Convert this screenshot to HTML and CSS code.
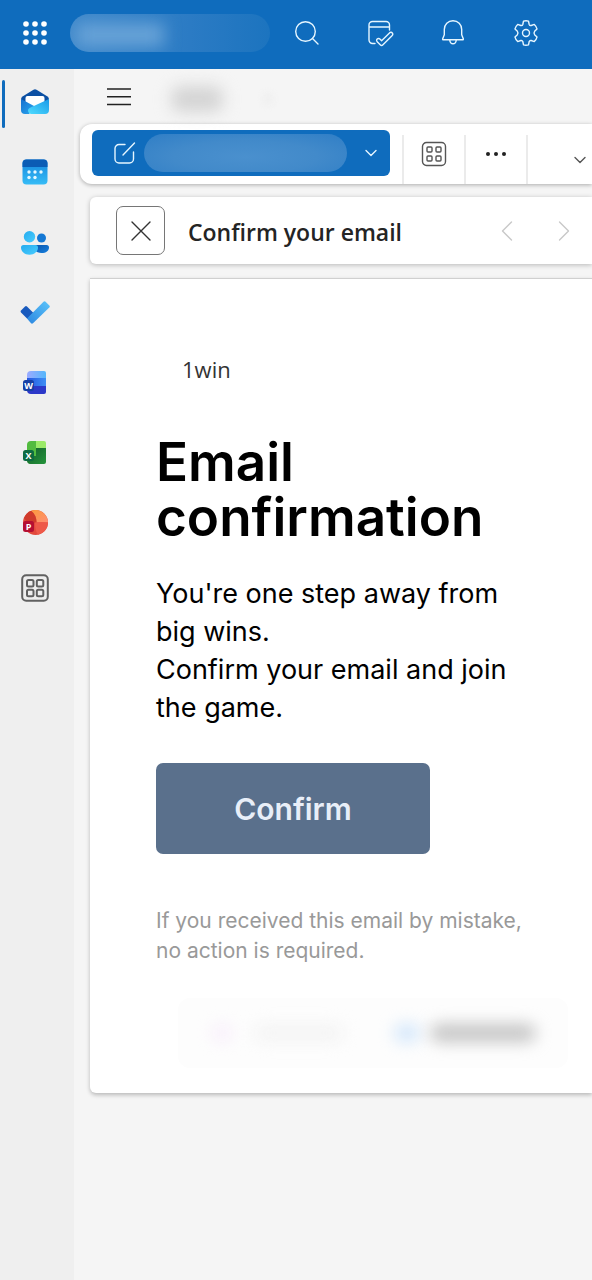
FILE: index.html
```html
<!DOCTYPE html>
<html lang="en">
<head>
  <meta charset="UTF-8">
  <meta name="viewport" content="width=device-width, initial-scale=1">
  <title>Confirm your email</title>
  <link rel="stylesheet" href="styles.css">
</head>
<body>

<header class="topbar">
  <button class="launcher" aria-label="App launcher">
    <svg width="26" height="26" viewBox="0 0 26 26" fill="#fff">
      <circle cx="4" cy="4" r="2.8"/><circle cx="13" cy="4" r="2.8"/><circle cx="22" cy="4" r="2.8"/>
      <circle cx="4" cy="13" r="2.8"/><circle cx="13" cy="13" r="2.8"/><circle cx="22" cy="13" r="2.8"/>
      <circle cx="4" cy="22" r="2.8"/><circle cx="13" cy="22" r="2.8"/><circle cx="22" cy="22" r="2.8"/>
    </svg>
  </button>
  <div class="brand"><span class="brand-smudge"></span></div>
  <button class="top-btn" aria-label="Search">
    <svg class="line" width="28" height="28" viewBox="0 0 28 28"><circle cx="12.5" cy="12.5" r="9.8"/><path d="M19.5 19.5L25 25"/></svg>
  </button>
  <button class="top-btn" aria-label="My day">
    <svg class="line" width="28" height="28" viewBox="0 0 28 28">
      <path d="M9 24.500H6.500a3.500 3.500 0 0 1-3.500-3.500V6a3.500 3.500 0 0 1 3.500-3.500H20A3.500 3.500 0 0 1 23.500 6v5M3 8h20.500"/>
      <path d="M24 13.500a1.900 1.900 0 0 1 2 3.200l-9.300 9.300a1.500 1.500 0 0 1-2.200 0l-3.300-3.300a1.900 1.900 0 0 1 2.700-2.700l1.700 1.700z"/>
    </svg>
  </button>
  <button class="top-btn" aria-label="Notifications">
    <svg class="line" width="28" height="28" viewBox="0 0 28 28">
      <path d="M14 1.800c-5 0-8.700 3.800-8.700 8.700v5.300l-1.600 4c-.2.500.1 1 .7 1h19.200c.6 0 .9-.5.700-1l-1.600-4v-5.300c0-4.900-3.700-8.700-8.700-8.700z"/>
      <path d="M10.800 21a3.200 3.800 0 0 0 6.400 0"/>
    </svg>
  </button>
  <button class="top-btn" aria-label="Settings">
    <svg class="line" width="28" height="28" viewBox="0 0 28 28">
      <path d="M11.500 2.200Q14 1.400 16.500 2.200L17.200 5.500Q17.700 6.800 19.200 6.500L22.300 5.400Q24.300 7.200 25 9.900L22.600 12.300Q21.400 14 22.600 15.700L25 18.100Q24.300 20.800 22.300 22.600L19.200 21.500Q17.700 21.200 17.200 22.500L16.500 25.800Q14 26.600 11.500 25.800L10.800 22.500Q10.300 21.200 8.800 21.500L5.700 22.600Q3.700 20.800 3 18.100L5.400 15.700Q6.600 14 5.400 12.300L3 9.900Q3.700 7.200 5.700 5.400L8.800 6.500Q10.300 6.800 10.800 5.500Z"/>
      <circle cx="14" cy="14" r="3.500"/>
    </svg>
  </button>
</header>

<div class="layout">
  <nav class="rail" aria-label="Apps">
    <a href="#" class="rail-item active" aria-label="Mail">
      <svg width="28" height="28" viewBox="0 0 28 28">
        <defs>
          <linearGradient id="mailL" x1="0" y1="0" x2="1" y2="1"><stop offset="0" stop-color="#1670cf"/><stop offset="1" stop-color="#2aa9f0"/></linearGradient>
          <linearGradient id="mailR" x1="0" y1="1" x2="1" y2="0"><stop offset="0" stop-color="#4fdcff"/><stop offset="1" stop-color="#1a9ae8"/></linearGradient>
        </defs>
        <path d="M0 11.500Q0 9.500 1.500 8.500L12.500 1.800Q14 .9 15.500 1.800L26.500 8.500Q28 9.500 28 11.500L14 21z" fill="#0b4fa3"/>
        <rect x="4.500" y="8" width="19" height="12" rx="2" fill="#fff"/>
        <path d="M0 11l14 7.500L8 26H4a4 4 0 0 1-4-4z" fill="url(#mailL)"/>
        <path d="M28 11v11a4 4 0 0 1-4 4H10.500a3.300 3.300 0 0 1-1.500-6.300z" fill="url(#mailR)"/>
      </svg>
    </a>
    <a href="#" class="rail-item" aria-label="Calendar">
      <svg width="26" height="26" viewBox="0 0 26 26">
        <defs><linearGradient id="cal" x1="0" y1="0" x2="0" y2="1"><stop offset="0" stop-color="#1586dd"/><stop offset="1" stop-color="#36bcf6"/></linearGradient></defs>
        <rect x=".5" y=".5" width="25" height="25" rx="4" fill="url(#cal)"/>
        <path d="M.5 8V4.500a4 4 0 0 1 4-4h17a4 4 0 0 1 4 4V8z" fill="#0b5cb5"/>
        <g fill="#e4f8ff"><circle cx="7" cy="13" r="1.700"/><circle cx="13" cy="13" r="1.700"/><circle cx="19" cy="13" r="1.700"/><circle cx="7" cy="18.500" r="1.700"/><circle cx="13" cy="18.500" r="1.700"/></g>
      </svg>
    </a>
    <a href="#" class="rail-item" aria-label="People">
      <svg width="28" height="28" viewBox="0 0 28 28">
        <defs>
          <linearGradient id="ppl" x1="0" y1="0" x2="1" y2="1"><stop offset="0" stop-color="#25abee"/><stop offset="1" stop-color="#49cdff"/></linearGradient>
          <linearGradient id="ppl2" x1="0" y1="0" x2="1" y2="1"><stop offset="0" stop-color="#0b55ac"/><stop offset="1" stop-color="#1580df"/></linearGradient>
        </defs>
        <circle cx="20.500" cy="10" r="4.500" fill="#1478d4"/>
        <path d="M14 17h11.500a2.500 2.500 0 0 1 2.500 2.500c0 3.500-3 5.500-7.500 5.500-3 0-5-1-6.500-2.500z" fill="url(#ppl2)"/>
        <circle cx="8.500" cy="8.800" r="5.700" fill="url(#ppl)"/>
        <path d="M2.500 17h12a2.500 2.500 0 0 1 2.500 2.500c0 4-3.500 7.200-8.500 7.200S0 23.500 0 19.500A2.500 2.500 0 0 1 2.500 17z" fill="url(#ppl)"/>
      </svg>
    </a>
    <a href="#" class="rail-item" aria-label="To Do">
      <svg width="30" height="30" viewBox="0 0 30 30">
        <defs><linearGradient id="todo" x1="0" y1="1" x2="1" y2="0"><stop offset="0" stop-color="#2b86e0"/><stop offset="1" stop-color="#5bc4fa"/></linearGradient></defs>
        <path d="M1 15.500a1.500 1.500 0 0 1 0-2l4-4a1.500 1.500 0 0 1 2 0l6.500 6.500-6 6z" fill="#185abd"/>
        <path d="M7 21.500L23.500 4.700a1.500 1.500 0 0 1 2.100 0l3.700 3.700a1.500 1.500 0 0 1 0 2.100L13 26.300a1.500 1.500 0 0 1-2 0z" fill="url(#todo)"/>
      </svg>
    </a>
    <a href="#" class="rail-item" aria-label="Word">
      <svg width="26" height="26" viewBox="0 0 26 26">
        <defs>
          <linearGradient id="wordT" x1="0" y1="0" x2="1" y2="0"><stop offset="0" stop-color="#9cabff"/><stop offset="1" stop-color="#54b6fb"/></linearGradient>
          <linearGradient id="wordM" x1="0" y1="0" x2="1" y2="0"><stop offset="0" stop-color="#2457df"/><stop offset="1" stop-color="#3f8ff5"/></linearGradient>
        </defs>
        <path d="M5 17h19v6a2 2 0 0 1-2 2H9a4 4 0 0 1-4-4z" fill="#2c38c9"/>
        <path d="M5 9h19v8H5z" fill="url(#wordM)"/>
        <path d="M5 9V6a4 4 0 0 1 4-4h13a2 2 0 0 1 2 2v5z" fill="url(#wordT)"/>
        <rect x="1" y="11" width="11" height="11" rx="2.500" fill="#163fa5"/>
        <text class="glyph" x="6.500" y="20">W</text>
      </svg>
    </a>
    <a href="#" class="rail-item" aria-label="Excel">
      <svg width="26" height="26" viewBox="0 0 26 26">
        <defs><linearGradient id="xl" x1="0" y1="0" x2="1" y2="1"><stop offset="0" stop-color="#135d2c"/><stop offset="1" stop-color="#25953b"/></linearGradient></defs>
        <path d="M5 6a4 4 0 0 1 4-4h5v23H9a4 4 0 0 1-4-4z" fill="#52bb3f"/>
        <path d="M14 2h8a2 2 0 0 1 2 2v5H14z" fill="#9bea68"/>
        <path d="M14 9h10v14a2 2 0 0 1-2 2H9a4 4 0 0 1-4-4v-4h9z" fill="url(#xl)"/>
        <rect x="1" y="11" width="11" height="11" rx="2.500" fill="#0d6b43"/>
        <text class="glyph" x="6.500" y="20">X</text>
      </svg>
    </a>
    <a href="#" class="rail-item" aria-label="PowerPoint">
      <svg width="26" height="26" viewBox="0 0 26 26">
        <defs><linearGradient id="ppt" x1="0" y1="0" x2="1" y2="1"><stop offset="0" stop-color="#fb9a3c"/><stop offset="1" stop-color="#ff8e74"/></linearGradient></defs>
        <circle cx="13.500" cy="13.500" r="12.500" fill="#e2483c"/>
        <path d="M9 1.800A12.500 12.500 0 0 1 26 13.500H14.500Q14.500 6 9 1.800z" fill="url(#ppt)"/>
        <path d="M9 1.800Q14.500 6 14.500 13.500L6 14 2 9Q4.500 3.500 9 1.800z" fill="#cf3a2b"/>
        <path d="M13 13.500q7-1 13 0A12.500 12.500 0 0 1 16 25.700q-3-4-3-12.200z" fill="#ee5949"/>
        <rect x="1" y="12" width="11" height="11" rx="2.500" fill="#b50f32"/>
        <text class="glyph" x="6.500" y="21">P</text>
      </svg>
    </a>
    <button class="rail-item more-apps" aria-label="More apps">
      <svg class="line" width="28" height="28" viewBox="0 0 28 28">
        <rect x="1.200" y="1.200" width="25.600" height="25.600" rx="4"/>
        <rect x="6" y="6" width="6.500" height="6.500" rx="1.500"/><rect x="15.800" y="6" width="6.500" height="6.500" rx="1.500"/>
        <rect x="6" y="15.800" width="6.500" height="6.500" rx="1.500"/><rect x="15.800" y="15.800" width="6.500" height="6.500" rx="1.500"/>
      </svg>
    </button>
  </nav>

  <main class="main">
    <div class="tabs">
      <button class="menu-btn" aria-label="Toggle folders">
        <svg class="line" width="24" height="18" viewBox="0 0 24 18"><path d="M0 1h24M0 8.700h24M0 16.500h24"/></svg>
      </button>
      <span class="tab-smudge"></span>
      <span class="tab-smudge faint"></span>
    </div>

    <div class="toolbar">
      <button class="compose" aria-label="New mail">
        <svg class="line" width="24" height="24" viewBox="0 0 24 24"><path d="M13 3.500H7A4 4 0 0 0 3 7.500V18a4 4 0 0 0 4 4h10.500a4 4 0 0 0 4-4v-7M11 14L22.500 2"/></svg>
        <span class="compose-smudge"></span>
        <svg class="line" width="12" height="8" viewBox="0 0 12 8"><path d="M1 1.500l5 5 5-5"/></svg>
      </button>
      <button class="tool" aria-label="Apps">
        <svg class="line" width="26" height="26" viewBox="0 0 26 26">
          <rect x="1.500" y="1.500" width="23" height="23" rx="4"/>
          <rect x="6" y="6" width="5" height="5" rx="1"/><rect x="15" y="6" width="5" height="5" rx="1"/>
          <rect x="6" y="15" width="5" height="5" rx="1"/><rect x="15" y="15" width="5" height="5" rx="1"/>
        </svg>
      </button>
      <button class="tool" aria-label="More options">
        <svg width="20" height="4" viewBox="0 0 20 4" fill="#222"><circle cx="2" cy="2" r="2"/><circle cx="10" cy="2" r="2"/><circle cx="18" cy="2" r="2"/></svg>
      </button>
      <button class="tool last" aria-label="Ribbon options">
        <svg class="line" width="12" height="8" viewBox="0 0 12 8"><path d="M1 1.500l5 5 5-5"/></svg>
      </button>
    </div>

    <div class="subject">
      <button class="close-btn" aria-label="Close">
        <svg class="line" width="20" height="20" viewBox="0 0 20 20"><path d="M1 1l18 18M19 1L1 19"/></svg>
      </button>
      <h2>Confirm your email</h2>
      <button class="step" aria-label="Previous"><svg class="line" width="12" height="20" viewBox="0 0 12 20"><path d="M10.500 1L1.500 10l9 9"/></svg></button>
      <button class="step" aria-label="Next"><svg class="line" width="12" height="20" viewBox="0 0 12 20"><path d="M1.500 1l9 9-9 9"/></svg></button>
    </div>

    <article class="mail">
      <p class="sender">1win</p>
      <h1>Email<br>confirmation</h1>
      <p class="lead">You're one step away from<br>big wins.<br>Confirm your email and join<br>the game.</p>
      <button class="confirm">Confirm</button>
      <p class="note">If you received this email by mistake,<br>no action is required.</p>
      <div class="links">
        <span class="blob pink"></span>
        <span class="blob pale"></span>
        <span class="blob blue"></span>
        <span class="blob gray"></span>
      </div>
    </article>
  </main>
</div>

</body>
</html>
```
FILE: styles.css
```css
* {
  box-sizing: border-box;
}
body {
  margin: 0;
  min-height: 100vh;
  display: flex;
  flex-direction: column;
  font-family: Inter, "Liberation Sans", sans-serif;
  background: #f5f5f5;
  color: #000;
  overflow-x: hidden;
}
h1, h2, p {
  margin: 0;
}
button {
  padding: 0;
  border: none;
  background: none;
  font-family: inherit;
  color: inherit;
  cursor: pointer;
}
svg {
  display: block;
  flex-shrink: 0;
}
.line {
  fill: none;
  stroke: currentColor;
  stroke-width: 1.4;
  stroke-linecap: round;
  stroke-linejoin: round;
}

/* top bar */
.topbar {
  display: flex;
  align-items: center;
  height: 69px;
  padding: 0 30px 3px 0;
  background: #0f6cbd;
  color: #e6f6ff;
}
.launcher {
  display: flex;
  justify-content: center;
  width: 70px;
}
.brand {
  flex: 1;
  height: 38px;
  border-radius: 19px;
  background: linear-gradient(90deg, #3f88ca, #2b7bc4 60%, #1c74bf);
  overflow: hidden;
}
.brand-smudge {
  display: block;
  width: 44%;
  height: 24px;
  margin: 9px 0 0 6px;
  background: #67a2d7;
  filter: blur(8px);
}
.top-btn {
  display: flex;
  justify-content: center;
  width: 73px;
}

/* left rail */
.layout {
  flex: 1;
  display: flex;
}
.rail {
  display: flex;
  flex-direction: column;
  gap: 22px;
  width: 74px;
  padding-top: 9px;
  background: #efefef;
}
.rail-item {
  position: relative;
  display: flex;
  align-items: center;
  justify-content: center;
  height: 48px;
  padding-right: 4px;
}
.rail-item.active::before {
  content: "";
  position: absolute;
  left: 2px;
  top: 2px;
  width: 3px;
  height: 48px;
  border-radius: 2px;
  background: #0f6cbd;
}
.more-apps {
  height: 40px;
  color: #616161;
}
.more-apps .line {
  stroke-width: 2;
}
.glyph {
  fill: #fff;
  font: bold 9px "Open Sans", sans-serif;
  text-anchor: middle;
}

/* reading area */
.main {
  flex: 1;
  min-width: 0;
  padding-left: 16px;
}
.tabs {
  display: flex;
  align-items: center;
  height: 55px;
  padding-left: 17px;
}
.menu-btn {
  color: #222;
}
.tab-smudge {
  width: 52px;
  height: 26px;
  margin: 4px 0 0 40px;
  border-radius: 10px;
  background: #d4d4d4;
  filter: blur(8px);
}
.tab-smudge.faint {
  width: 10px;
  height: 12px;
  background: #efefef;
  filter: blur(3px);
}
.toolbar {
  display: flex;
  height: 60px;
  margin-left: -10px;
  padding-left: 12px;
  border-radius: 12px 0 0 12px;
  background: #fff;
  box-shadow: 0 1px 4px rgba(0, 0, 0, 0.3);
}
.compose {
  display: flex;
  align-items: center;
  gap: 8px;
  flex: 1;
  height: 46px;
  margin: 6px 12px 0 0;
  padding: 0 13px 0 20px;
  border-radius: 6px;
  background: #0f6cbd;
  color: #e6f6ff;
}
.compose-smudge {
  flex: 1;
  height: 38px;
  margin-right: 10px;
  border-radius: 19px;
  background: radial-gradient(ellipse at 50% 60%, #4a90ce 0%, #428aca 50%, #2f7ec6 100%);
}
.tool {
  display: flex;
  align-items: center;
  justify-content: center;
  width: 62px;
  height: 49px;
  margin-top: 11px;
  padding-bottom: 11px;
  border-left: 2px solid #ebebeb;
  color: #555;
}
.tool.last {
  width: 66px;
  padding: 0 6px 0 0;
  justify-content: flex-end;
}
.subject {
  display: flex;
  align-items: center;
  height: 67px;
  margin-top: 13px;
  padding: 0 22px 0 26px;
  border-radius: 6px 0 0 6px;
  background: #fff;
  box-shadow: 0 1px 5px rgba(0, 0, 0, 0.25);
}
.close-btn {
  display: flex;
  align-items: center;
  justify-content: center;
  width: 49px;
  height: 49px;
  border: 1px solid #767676;
  border-radius: 7px;
  color: #333;
}
.subject h2 {
  flex: 1;
  padding: 2px 0 0 23px;
  font: 600 23px/30px "Open Sans", "Noto Sans", sans-serif;
  color: #242424;
  white-space: nowrap;
}
.step {
  color: #c8c8c8;
}
.step + .step {
  margin-left: 45px;
}

/* message */
.mail {
  margin-top: 14px;
  padding: 75px 24px 25px 66px;
  border-top: 1px solid #d0d0d0;
  border-radius: 0 0 0 6px;
  background: #fff;
  box-shadow: 0 2px 4px rgba(0, 0, 0, 0.25);
}
.sender {
  padding-left: 26px;
  font: 22px/30px "Open Sans", "Noto Sans", sans-serif;
  color: #333;
}
h1 {
  margin-top: 51px;
  font-size: 53px;
  line-height: 55px;
  font-weight: 600;
}
.lead {
  margin-top: 30px;
  font-size: 27px;
  line-height: 38px;
}
.confirm {
  display: block;
  width: 274px;
  height: 91px;
  margin-top: 36px;
  border-radius: 7px;
  background: #5a708c;
  color: #e8eef8;
  font-size: 30px;
  font-weight: 600;
}
.note {
  margin-top: 52px;
  font-size: 21px;
  line-height: 30px;
  color: #999;
}
.links {
  display: flex;
  align-items: center;
  height: 70px;
  margin: 32px 0 0 22px;
  padding-left: 34px;
  border-radius: 12px;
  background: #fdfdfd;
}
.blob {
  height: 18px;
  border-radius: 9px;
  filter: blur(8px);
}
.pink {
  width: 20px;
  background: #f8eefb;
}
.pale {
  width: 90px;
  margin-left: 22px;
  background: #f4f4f4;
}
.blue {
  width: 26px;
  margin-left: 50px;
  background: #d2e6fb;
}
.gray {
  width: 106px;
  margin-left: 10px;
  background: #c4c4c4;
}
```
